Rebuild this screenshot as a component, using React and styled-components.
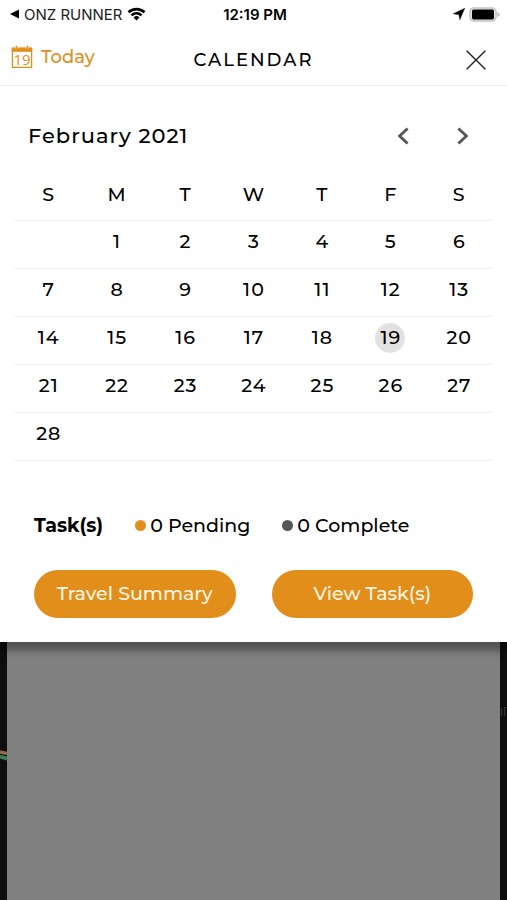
import React, { useState } from 'react'
import styled, { createGlobalStyle } from 'styled-components'

const weekDays = ["S", "M", "T", "W", "T", "F", "S"]
const monthNames = ["January", "February", "March", "April", "May", "June", "July",
    "August", "September", "October", "November", "December"]
const dayNames = ["Sunday", "Monday", "Tuesday", "Wednesday", "Thursday", "Friday", "Saturday"]
const today = { year: 2021, month: 1, day: 19 }

function getWeeks(year, month) {
    const first = new Date(year, month, 1).getDay()
    const total = new Date(year, month + 1, 0).getDate()
    const cells = Array(first).fill(null)
    for (let d = 1; d <= total; d++) {
        cells.push(d)
    }
    // fill up the last week
    while (cells.length % 7 !== 0) {
        cells.push(null)
    }
    const weeks = []
    for (let i = 0; i < cells.length; i += 7) {
        weeks.push(cells.slice(i, i + 7))
    }
    return weeks
}

function StatusBar() {
    return (
        <Status>
            <BackApp href="#back">
                <svg width="10" height="10" viewBox="0 0 10 10" aria-hidden="true">
                    <path d="M0 5 L9 0.6 V9.4 Z" fill="#000" />
                </svg>
                <span>ONZ RUNNER</span>
                <svg width="19" height="14" viewBox="0 0 20 14" aria-hidden="true">
                    <path d="M1.6 5.2 A12 12 0 0 1 18.4 5.2" fill="none" stroke="#000" strokeWidth="2.9" />
                    <path d="M4.7 8.4 A7.6 7.6 0 0 1 15.3 8.4" fill="none" stroke="#000" strokeWidth="2.7" />
                    <path d="M10 13.8 L6.9 10.7 A4.4 4.4 0 0 1 13.1 10.7 Z" fill="#000" />
                </svg>
            </BackApp>
            <Clock>12:19 PM</Clock>
            <Indicators>
                <svg width="12" height="12" viewBox="0 0 12 12" aria-hidden="true">
                    <path d="M11.8 0.2 L6.8 11.8 L6 6.8 L0.2 5.8 Z" fill="#000" stroke="#000" strokeWidth="0.4" />
                </svg>
                <svg width="31" height="15" viewBox="0 0 31 15" aria-hidden="true">
                    <rect x="1" y="1" width="26" height="13" rx="4" fill="#e6e6e6" stroke="#c4c4c4" strokeWidth="1.6" />
                    <rect x="3" y="2.6" width="22" height="9.8" rx="1.6" fill="#000" />
                    <path d="M28.4 5 Q30.6 6 30.6 7.5 Q30.6 9 28.4 10 Z" fill="#b5b5b5" />
                </svg>
            </Indicators>
        </Status>
    )
}

function App() {
    const [year, setYear] = useState(today.year)
    const [month, setMonth] = useState(today.month)

    function changeMonth(step) {
        const next = new Date(year, month + step, 1)
        setYear(next.getFullYear())
        setMonth(next.getMonth())
    }

    function goToday() {
        setYear(today.year)
        setMonth(today.month)
    }

    function isToday(day) {
        return day === today.day && month === today.month && year === today.year
    }

    return (
        <Screen>
            <GlobalStyle />
            <Panel>
                <StatusBar />
                <Header>
                    <TodayButton type="button" onClick={goToday}>
                        <svg width="22" height="24" viewBox="0 0 22 24" aria-hidden="true">
                            <path d="M1.4 4 H20.6 V22.4 H1.4 Z" fill="none" stroke="#e28e1a" strokeWidth="1.3" />
                            <path d="M0.8 2.4 H21.2 V6.8 H0.8 Z" fill="#e28e1a" />
                            <path d="M5.5 0.6 V3.4 M16.5 0.6 V3.4" stroke="#fff" strokeWidth="3" />
                            <path d="M5.5 0.8 V4.2 M16.5 0.8 V4.2" stroke="#e28e1a" strokeWidth="1.8" />
                            <text x="11" y="19.8" textAnchor="middle" fontSize="15">19</text>
                        </svg>
                        <span>Today</span>
                    </TodayButton>
                    <Title>CALENDAR</Title>
                    <CloseButton type="button" aria-label="Close">
                        <svg width="20" height="20" viewBox="0 0 20 20" aria-hidden="true">
                            <path d="M0.7 0.7 L19.3 19.3 M19.3 0.7 L0.7 19.3" stroke="#222" strokeWidth="1.4" />
                        </svg>
                    </CloseButton>
                </Header>

                <MonthBar>
                    <MonthName>{monthNames[month]} {year}</MonthName>
                    <ArrowButton type="button" aria-label="Previous month" onClick={() => changeMonth(-1)}>
                        <svg width="12" height="18" viewBox="0 0 12 18" aria-hidden="true">
                            <path d="M10.6 1.4 L2.6 9 L10.6 16.6" fill="none" stroke="#555" strokeWidth="2.8" />
                        </svg>
                    </ArrowButton>
                    <ArrowButton type="button" aria-label="Next month" onClick={() => changeMonth(1)}>
                        <svg width="12" height="18" viewBox="0 0 12 18" aria-hidden="true">
                            <path d="M1.4 1.4 L9.4 9 L1.4 16.6" fill="none" stroke="#555" strokeWidth="2.8" />
                        </svg>
                    </ArrowButton>
                </MonthBar>

                <GridArea>
                    <MonthGrid>
                        <thead>
                            <tr>
                                {weekDays.map((d, i) => <th key={i} scope="col" abbr={dayNames[i]}>{d}</th>)}
                            </tr>
                        </thead>
                        <tbody>
                            {getWeeks(year, month).map((week, w) => (
                                <tr key={w}>
                                    {week.map((day, i) => (
                                        <td key={i}>
                                            {day ? <DayButton type="button" $today={isToday(day)}>{day}</DayButton> : null}
                                        </td>
                                    ))}
                                </tr>
                            ))}
                        </tbody>
                    </MonthGrid>
                </GridArea>

                <TaskSummary>
                    <TaskLabel>Task(s)</TaskLabel>
                    <TaskCount $color="#e28e1a">0 Pending</TaskCount>
                    <TaskCount $color="#555">0 Complete</TaskCount>
                </TaskSummary>
                <Actions>
                    <ActionButton type="button">Travel Summary</ActionButton>
                    <ActionButton type="button">View Task(s)</ActionButton>
                </Actions>
            </Panel>

            <Backdrop>
                <MapEdge $top="108px">
                    <svg width="7" height="12" viewBox="0 0 7 12" aria-hidden="true">
                        <path d="M0 2 L7 3.4" stroke="#94694a" strokeWidth="3.4" />
                        <path d="M0 6.6 L7 8.6" stroke="#3f8250" strokeWidth="3.8" />
                    </svg>
                </MapEdge>
                <Dim />
                <MapEdge $top="64px">
                    <svg width="7" height="11" viewBox="0 0 7 11" aria-hidden="true">
                        <path d="M1.5 2 V10 M4.5 1 V10 M4.5 1.5 H7" fill="none" stroke="#333" strokeWidth="1.2" />
                    </svg>
                </MapEdge>
            </Backdrop>
        </Screen>
    )
}

export default App

const GlobalStyle = createGlobalStyle`
    *{
        box-sizing:border-box;
    }
    body{
        margin:0;
        color:#000;
        font-family:Montserrat, Inter, "Open Sans", sans-serif;
        font-size:19px;
        font-weight:500;
    }
    button{
        padding:0;
        border:none;
        background:none;
        color:inherit;
        font:inherit;
        cursor:pointer;
    }
    svg{
        display:block;
    }
`

const Screen = styled.div`
    display:flex;
    flex-direction:column;
    min-height:100vh;
`

const Panel = styled.main`
    position:relative;
    padding-bottom:24px;
    background:#fff;
    box-shadow:0 9px 7px rgba(0,0,0,0.35);
`

const Status = styled.div`
    display:grid;
    grid-template-columns:1fr auto 1fr;
    align-items:center;
    height:28px;
    padding:0 7px 0 10px;
    font-family:Inter, sans-serif;
    font-size:15px;
`

const BackApp = styled.a`
    display:flex;
    align-items:center;
    gap:4px;
    color:#222;
    font-weight:400;
    text-decoration:none;
`

const Clock = styled.span`
    font-weight:600;
`

const Indicators = styled.div`
    display:flex;
    align-items:center;
    justify-content:flex-end;
    gap:4px;
`

const Header = styled.header`
    display:grid;
    grid-template-columns:1fr auto 1fr;
    align-items:center;
    height:58px;
    padding:6px 11px 0;
    border-bottom:1px solid #ececec;
`

const TodayButton = styled.button`
    display:flex;
    align-items:center;
    justify-self:start;
    gap:8px;
    padding-bottom:6px;
    color:#e28e1a;
    font-size:18px;
    svg text{
        fill:#e28e1a;
        font-family:"Open Sans", sans-serif;
        font-weight:400;
    }
`

const Title = styled.h1`
    margin:0;
    font-size:18px;
    font-weight:500;
    letter-spacing:2px;
`

const CloseButton = styled.button`
    justify-self:end;
    padding-right:10px;
`

const MonthBar = styled.div`
    display:flex;
    align-items:center;
    gap:36px;
    padding:36px 32px 19px 28px;
`

const MonthName = styled.h2`
    flex:1;
    margin:0;
    font-size:21px;
    font-weight:500;
    line-height:28px;
    letter-spacing:1px;
`

const ArrowButton = styled.button`
    display:flex;
    justify-content:center;
    width:24px;
`

const GridArea = styled.div`
    padding:0 14px;
`

const MonthGrid = styled.table`
    width:100%;
    border-collapse:collapse;
    table-layout:fixed;
    th, td{
        height:48px;
        padding:0 0 4px;
        border-bottom:1px solid #f2f2f2;
        font-weight:500;
        text-align:center;
        vertical-align:middle;
    }
    thead th{
        height:51px;
        padding:0;
    }
`

const DayButton = styled.button`
    width:30px;
    height:30px;
    border-radius:50%;
    background:${props => props.$today ? "#e2e2e2" : "none"};
    line-height:30px;
    letter-spacing:1px;
    text-indent:1px;
    vertical-align:middle;
`

const TaskSummary = styled.div`
    display:flex;
    align-items:center;
    gap:32px;
    padding:52px 34px 31px;
    line-height:26px;
`

const TaskLabel = styled.strong`
    font-weight:700;
`

const TaskCount = styled.span`
    display:flex;
    align-items:center;
    gap:4px;
    &::before{
        content:"";
        width:11px;
        height:11px;
        border-radius:50%;
        background:${props => props.$color};
    }
`

const Actions = styled.div`
    display:flex;
    gap:36px;
    padding:0 34px;
`

const ActionButton = styled.button`
    flex:1;
    height:48px;
    border-radius:24px;
    background:#e28e1a;
    color:#fff6e4;
`

const Backdrop = styled.div`
    display:flex;
    flex:1;
    min-height:160px;
`

// slice of the map that shows beside the dimmed card
const MapEdge = styled.div`
    width:7px;
    padding-top:${props => props.$top};
    background:#0e0e0e;
`

const Dim = styled.div`
    flex:1;
    background:#808080;
`
